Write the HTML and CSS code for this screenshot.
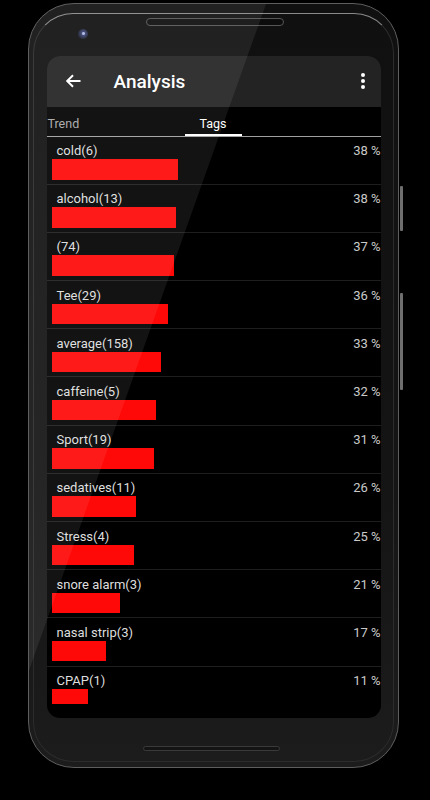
FILE: index.html
```html
<!DOCTYPE html>
<html lang="en">
<head>
<meta charset="utf-8">
<title>Analysis</title>
<link rel="stylesheet" href="styles.css">
</head>
<body>
<div class="phone">
  <div class="bevel"></div>
  <div class="side-btn btn-power"></div>
  <div class="side-btn btn-volume"></div>
  <div class="top">
    <div class="speaker"></div>
    <div class="camera"></div>
  </div>
  <div class="screen">
    <div class="appbar">
      <svg class="back" width="16" height="14" viewBox="0 0 16 14"><path d="M15.5 7H2.2M8 1.2L2.2 7L8 12.8" fill="none" stroke="#fff" stroke-width="2"/></svg>
      <div class="title">Analysis</div>
      <div class="kebab"><span></span><span></span><span></span></div>
    </div>
    <div class="tabs">
      <div class="tab trend">Trend</div>
      <div class="tab tags">Tags</div>
    </div>
    <div class="list">
      <div class="row"><div class="label">cold(6)</div><div class="pct">38 %</div><div class="bar" style="width:126px"></div></div>
      <div class="row"><div class="label">alcohol(13)</div><div class="pct">38 %</div><div class="bar" style="width:124px"></div></div>
      <div class="row"><div class="label">(74)</div><div class="pct">37 %</div><div class="bar" style="width:122px"></div></div>
      <div class="row"><div class="label">Tee(29)</div><div class="pct">36 %</div><div class="bar" style="width:116px"></div></div>
      <div class="row"><div class="label">average(158)</div><div class="pct">33 %</div><div class="bar" style="width:109px"></div></div>
      <div class="row"><div class="label">caffeine(5)</div><div class="pct">32 %</div><div class="bar" style="width:104px"></div></div>
      <div class="row"><div class="label">Sport(19)</div><div class="pct">31 %</div><div class="bar" style="width:102px"></div></div>
      <div class="row"><div class="label">sedatives(11)</div><div class="pct">26 %</div><div class="bar" style="width:84px"></div></div>
      <div class="row"><div class="label">Stress(4)</div><div class="pct">25 %</div><div class="bar" style="width:82px"></div></div>
      <div class="row"><div class="label">snore alarm(3)</div><div class="pct">21 %</div><div class="bar" style="width:68px"></div></div>
      <div class="row"><div class="label">nasal strip(3)</div><div class="pct">17 %</div><div class="bar" style="width:54px"></div></div>
      <div class="row"><div class="label">CPAP(1)</div><div class="pct">11 %</div><div class="bar" style="width:36px"></div></div>
    </div>
  </div>
  <div class="home-slot"></div>
  <div class="glare"></div>
</div>
</body>
</html>
```

FILE: styles.css
```css
html, body {
  margin: 0;
  padding: 0;
  background: #000;
}
body {
  width: 430px;
  height: 800px;
  overflow: hidden;
  font-family: Roboto, "Liberation Sans", Arial, sans-serif;
}
.phone {
  position: relative;
  box-sizing: border-box;
  margin: 3px 0 0 28px;
  width: 371px;
  height: 765px;
  border: 1.5px solid #5e5e5e;
  border-radius: 46px;
  background: linear-gradient(#101010 0%, #141414 60%, #1c1c1c 100%);
  display: flex;
  flex-direction: column;
}
.bevel {
  position: absolute;
  top: 8.5px;
  left: 4px;
  right: 4px;
  bottom: 5px;
  border-radius: 40px;
  border: 1px solid #2c2c2c;
  border-top-color: #8a8a8a;
  pointer-events: none;
}
.side-btn {
  position: absolute;
  right: -4.5px;
  width: 2.5px;
  background: #6e6e6e;
  border-radius: 1px;
}
.btn-power { top: 182px; height: 45px; }
.btn-volume { top: 288.5px; height: 97px; }
.top {
  height: 51.5px;
  display: flex;
  flex-direction: column;
  flex: 0 0 auto;
}
.speaker {
  margin: 13.5px 0 0 116.5px;
  width: 136px;
  height: 6px;
  border-radius: 4px;
  border: 1px solid #555;
  background: #0c0c0c;
}
.camera {
  margin: 3px 0 0 49px;
  width: 10px;
  height: 10px;
  border-radius: 50%;
  background: radial-gradient(circle at 55% 45%, #aab4e0 0 1px, #3a4270 2px, #1d2238 5px);
}
.screen {
  flex: 0 0 662px;
  margin: 0 17.5px;
  background: #000;
  border-radius: 13px;
  overflow: hidden;
  display: flex;
  flex-direction: column;
}
.appbar {
  flex: 0 0 51px;
  background: #232323;
  display: flex;
  align-items: center;
  padding: 0 18px;
}
.back {
  display: block;
  flex: 0 0 auto;
}
.title {
  margin-left: 33px;
  margin-top: 2px;
  color: #fff;
  font-size: 19px;
  font-weight: 500;
  line-height: 22px;
}
.kebab {
  margin-left: auto;
  display: flex;
  flex-direction: column;
  gap: 2px;
  margin-right: -2px;
}
.kebab span {
  display: block;
  width: 4px;
  height: 4px;
  border-radius: 50%;
  background: #fff;
}
.tabs {
  flex: 0 0 30px;
  box-sizing: border-box;
  border-bottom: 1px solid #a0a0a0;
  display: flex;
}
.tab {
  box-sizing: border-box;
  height: 29px;
  padding-top: 9px;
  line-height: 15px;
  font-size: 12.5px;
}
.tab.trend {
  width: 32px;
  padding-left: 1px;
  color: #a8a8a8;
}
.tab.tags {
  width: 57px;
  margin-left: 106px;
  text-align: center;
  color: #fff;
  border-bottom: 2px solid #fff;
}
.list {
  flex: 0 0 567px;
  overflow: hidden;
}
.row {
  box-sizing: border-box;
  height: 48.2px;
  border-bottom: 1px solid #1e1e1e;
  padding: 6.5px 0 0 5px;
  display: grid;
  grid-template-columns: 1fr auto;
  grid-template-rows: 16px 20.5px;
}
.label {
  padding-left: 5px;
  font-size: 13px;
  line-height: 16px;
  color: #dedede;
}
.pct {
  font-size: 13px;
  line-height: 16px;
  color: #cacaca;
  text-align: right;
}
.bar {
  grid-column: 1 / -1;
  height: 20.5px;
  background: #ff0808;
}
.home-slot {
  margin: 28px 0 0 113.5px;
  width: 135px;
  height: 3px;
  border-radius: 3px;
  border: 1px solid #3a3a3a;
  background: #141414;
}
.glare {
  position: absolute;
  top: 0;
  left: 0;
  right: 0;
  bottom: 0;
  border-radius: 44px;
  background: rgba(255, 255, 255, 0.075);
  clip-path: polygon(0 0, 237px 0, -34px 762px, 0 762px);
  pointer-events: none;
}
```
